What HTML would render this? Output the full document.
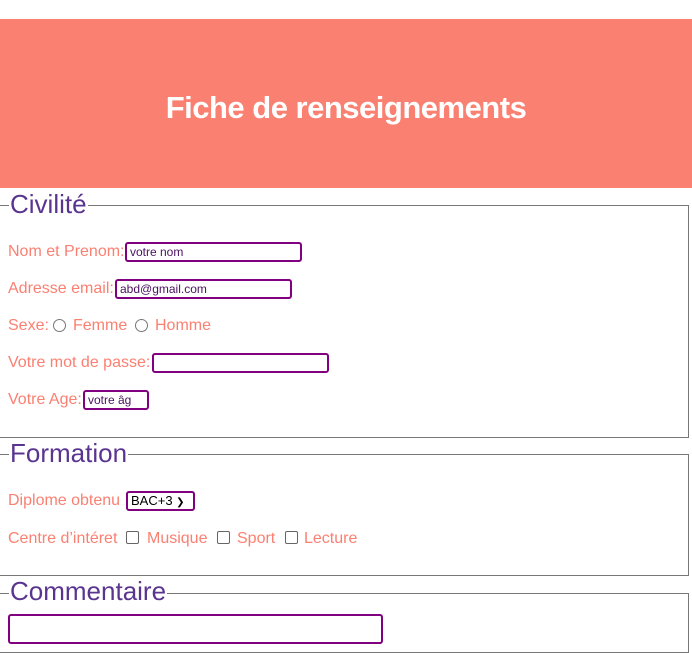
<!DOCTYPE html>
<html><head><meta charset="utf-8"><style>
*{box-sizing:border-box;margin:0;padding:0}
body{width:692px;height:620px;overflow:hidden;background:#fff;font-family:"Liberation Sans",sans-serif;position:relative}
.a{position:absolute}
.hdr{left:0;top:19px;width:692px;height:169px;background:#fa8072;color:#fff;font-size:31px;font-weight:bold;text-align:center;line-height:178px;letter-spacing:-0.5px}
.fs{left:0;width:689px;border:1px solid #777;border-left:none}
.lg{background:#fff;color:#5a3590;font-size:26px;padding:0 1px;line-height:30px}
.lb{color:#fa8072;font-size:16px;line-height:18px;white-space:nowrap}
.in{border:2px solid #800080;border-radius:3px;height:20px;font-size:12px;color:#4a1060;padding-left:3px;line-height:16px;background:#fff;overflow:hidden;white-space:nowrap}
.rd{width:13px;height:13px;border:1px solid #777;border-radius:50%}
.cb{width:13px;height:13px;border:1px solid #666;border-radius:2px}
</style></head><body>
<div class="a hdr">Fiche de renseignements</div>

<div class="a fs" style="top:205px;height:233px"></div>
<div class="a" style="left:0;top:205px;width:10px;height:1px;background:#777"></div>
<div class="a lg" style="left:9px;top:189px">Civilité</div>
<div class="a lb" style="left:8px;top:243px">Nom et Prenom:</div>
<div class="a in" style="left:125px;top:242px;width:177px">votre nom</div>
<div class="a lb" style="left:8px;top:280px">Adresse email:</div>
<div class="a in" style="left:115px;top:279px;width:177px">abd@gmail.com</div>
<div class="a lb" style="left:8px;top:317px">Sexe:</div>
<div class="a rd" style="left:53px;top:319px"></div>
<div class="a lb" style="left:73px;top:317px">Femme</div>
<div class="a rd" style="left:135px;top:319px"></div>
<div class="a lb" style="left:155px;top:317px">Homme</div>
<div class="a lb" style="left:8px;top:354px">Votre mot de passe:</div>
<div class="a in" style="left:152px;top:353px;width:177px"></div>
<div class="a lb" style="left:8px;top:391px">Votre Age:</div>
<div class="a in" style="left:83px;top:390px;width:66px">votre âg</div>

<div class="a fs" style="top:454px;height:122px"></div>
<div class="a" style="left:0;top:454px;width:10px;height:1px;background:#777"></div>
<div class="a lg" style="left:9px;top:438px">Formation</div>
<div class="a lb" style="left:8px;top:492px">Diplome obtenu</div>
<div class="a in" style="left:126px;top:491px;width:69px;color:#000;font-size:13px">BAC+3 <span style="font-size:10px">&#10095;</span></div>
<div class="a lb" style="left:8px;top:530px">Centre d’intéret</div>
<div class="a cb" style="left:126px;top:531px"></div>
<div class="a lb" style="left:147px;top:530px">Musique</div>
<div class="a cb" style="left:217px;top:531px"></div>
<div class="a lb" style="left:237px;top:530px">Sport</div>
<div class="a cb" style="left:285px;top:531px"></div>
<div class="a lb" style="left:304px;top:530px">Lecture</div>

<div class="a fs" style="top:593px;height:60px"></div>
<div class="a" style="left:0;top:593px;width:10px;height:1px;background:#777"></div>
<div class="a lg" style="left:9px;top:576px">Commentaire</div>
<div class="a in" style="left:8px;top:614px;width:375px;height:30px"></div>
</body></html>
